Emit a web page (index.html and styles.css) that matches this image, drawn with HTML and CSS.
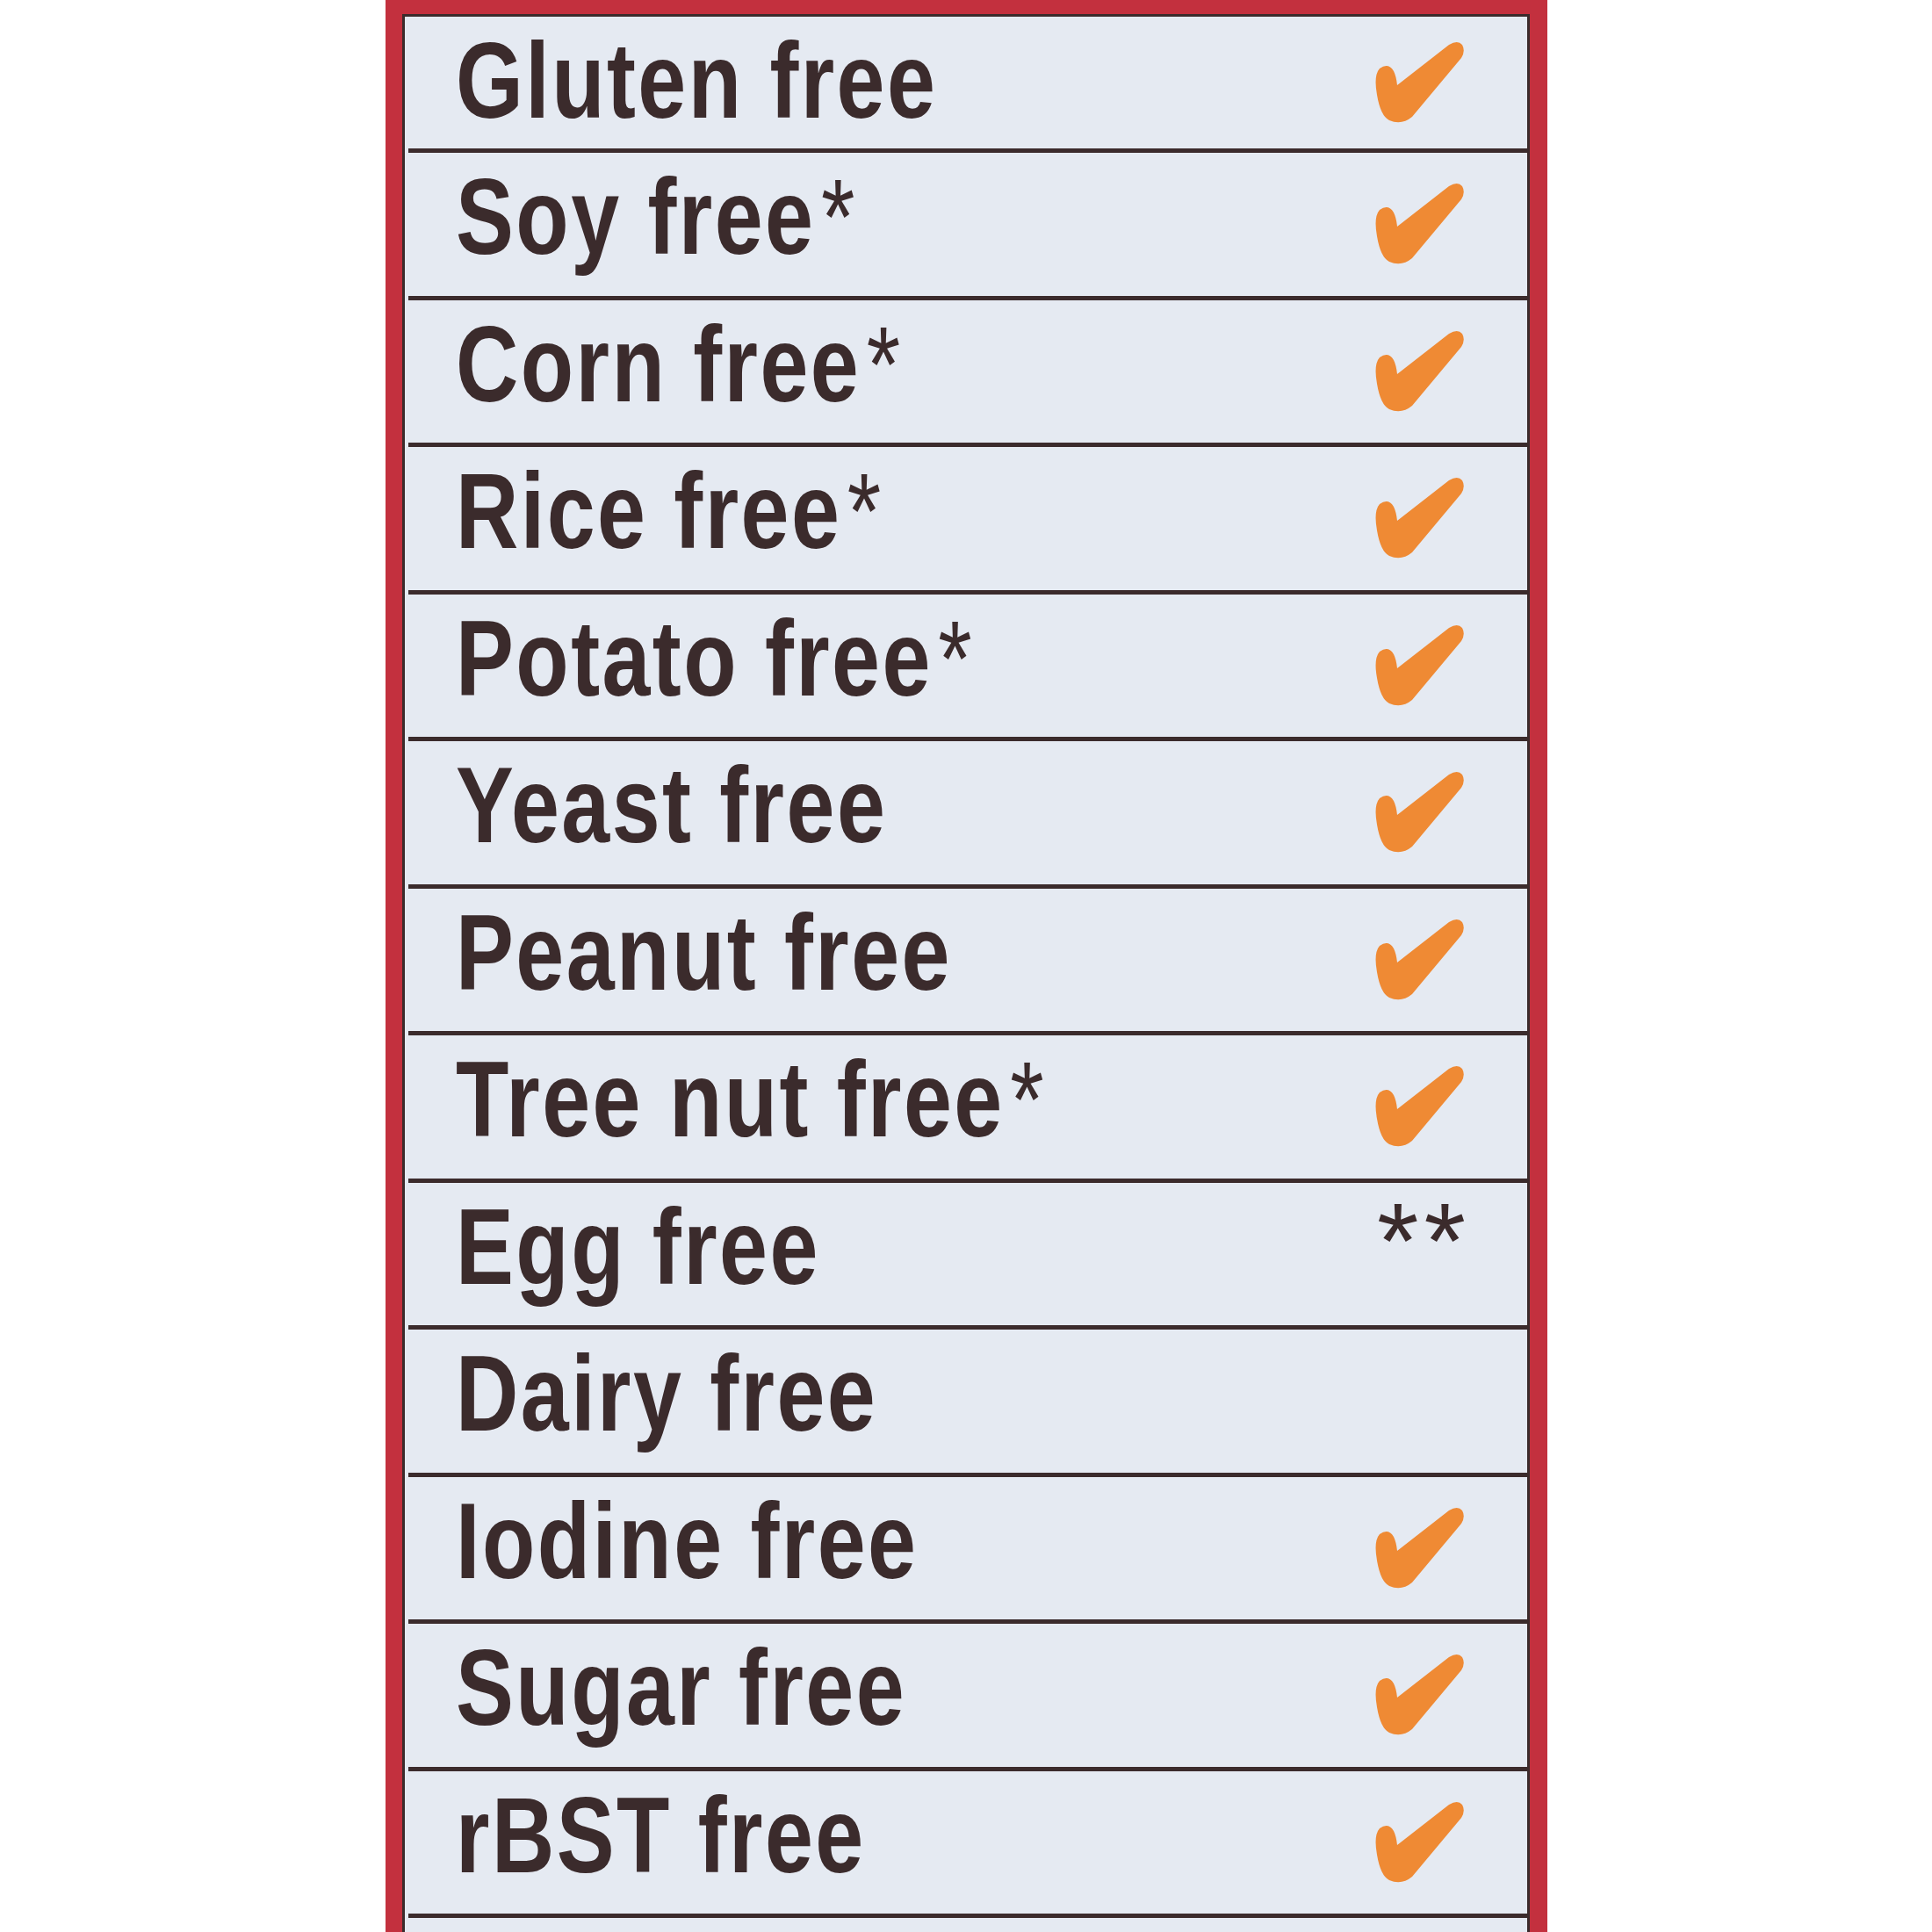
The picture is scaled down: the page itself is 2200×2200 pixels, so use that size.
FILE: index.html
```html
<!DOCTYPE html>
<html lang="en">
<head>
<meta charset="utf-8">
<title>Free from</title>
<link rel="stylesheet" href="styles.css">
</head>
<body>
<svg class="defs" width="0" height="0" aria-hidden="true">
  <symbol id="check" viewBox="0 0 104 92">
    <path d="M28 49 L87 3 Q97 -3 102 3 Q106 10 101 18 L45 85 Q33 95 19 89 Q9 84 5 60 Q1 38 8 30 Q18 23 24 33 Q27 39 28 49 Z"/>
  </symbol>
</svg>
<main class="sheet">
  <section class="panel">
    <div class="row row--first"><span class="label">Gluten free</span><svg class="tick"><use href="#check"/></svg></div>
    <div class="row"><span class="label">Soy free<span class="star">*</span></span><svg class="tick"><use href="#check"/></svg></div>
    <div class="row"><span class="label">Corn free<span class="star">*</span></span><svg class="tick"><use href="#check"/></svg></div>
    <div class="row"><span class="label">Rice free<span class="star">*</span></span><svg class="tick"><use href="#check"/></svg></div>
    <div class="row"><span class="label">Potato free<span class="star">*</span></span><svg class="tick"><use href="#check"/></svg></div>
    <div class="row"><span class="label">Yeast free</span><svg class="tick"><use href="#check"/></svg></div>
    <div class="row"><span class="label">Peanut free</span><svg class="tick"><use href="#check"/></svg></div>
    <div class="row"><span class="label">Tree nut free<span class="star">*</span></span><svg class="tick"><use href="#check"/></svg></div>
    <div class="row"><span class="label">Egg free</span><span class="note">**</span></div>
    <div class="row"><span class="label">Dairy free</span></div>
    <div class="row"><span class="label">Iodine free</span><svg class="tick"><use href="#check"/></svg></div>
    <div class="row"><span class="label">Sugar free</span><svg class="tick"><use href="#check"/></svg></div>
    <div class="row"><span class="label">rBST free</span><svg class="tick"><use href="#check"/></svg></div>
    <div class="row"></div>
  </section>
</main>
</body>
</html>
```

FILE: styles.css
```css
html, body {
  margin: 0;
  padding: 0;
  background: #ffffff;
  overflow: hidden;
}

.defs {
  position: absolute;
  width: 0;
  height: 0;
}

.sheet {
  box-sizing: border-box;
  width: 1323px;
  height: 2200px;
  margin-left: 439px;
  padding: 16px 20px 0 19px;
  background: #c3303e;
  display: flex;
  flex-direction: column;
}

.panel {
  flex: 1;
  border: 3px solid #3b2b2c;
  border-bottom: none;
  background: #e5eaf2;
  display: flex;
  flex-direction: column;
  overflow: hidden;
}

.row {
  box-sizing: border-box;
  flex: 0 0 167.5px;
  margin-left: 4px;
  border-bottom: 5px solid #3b2b2c;
  display: flex;
  align-items: center;
  justify-content: space-between;
  padding-left: 54px;
  padding-right: 72px;
  font-family: "Liberation Sans", Arial, sans-serif;
  font-weight: bold;
  color: #3b2b2c;
}

.row--first {
  flex-basis: 155px;
}

.label {
  align-self: flex-start;
  display: inline-block;
  padding-top: 12px;
  font-size: 122px;
  line-height: 122px;
  letter-spacing: 3px;
  white-space: nowrap;
  transform: scaleX(0.81);
  transform-origin: left top;
}

.star {
  font-weight: normal;
  margin-left: 8px;
}

.note {
  align-self: flex-start;
  padding-top: 5px;
  font-size: 122px;
  line-height: 122px;
  font-weight: normal;
  letter-spacing: 6px;
  margin-right: -8px;
}

.tick {
  width: 104px;
  height: 92px;
  fill: #ef8a34;
}
```
